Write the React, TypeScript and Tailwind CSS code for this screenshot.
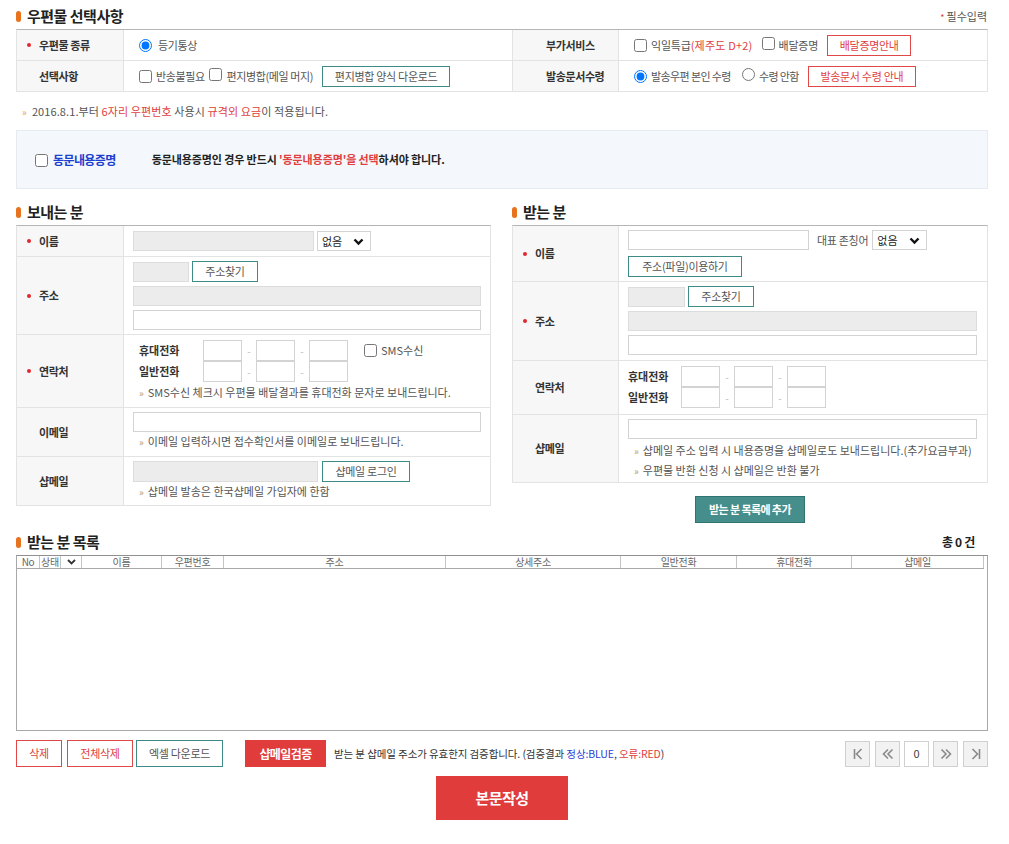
import React from "react";

const Bullet = ({ req }: { req?: boolean }) => (
  <span className="w-[12px] flex items-center shrink-0">
    {req && <span className="w-[4px] h-[4px] rounded-full bg-[#e0282e]" />}
  </span>
);

function Label({ children, req }: { children: React.ReactNode; req?: boolean }) {
  return (
    <div className="bg-[#f7f7f7] border-r border-[#e3e3e3] flex items-center pl-[10px] text-[11px] font-bold text-[#333] tracking-[-0.4px]">
      <Bullet req={req} />
      {children}
    </div>
  );
}

function Title({ children }: { children: React.ReactNode }) {
  return (
    <div className="flex items-center gap-[6px] h-[20px]">
      <span className="w-[5px] h-[11px] rounded-[3px] bg-[#e8731e]" />
      <span className="text-[15px] font-bold text-[#222] tracking-[-0.5px]">{children}</span>
    </div>
  );
}

const Note = ({ children, h = "h-[16px]" }: { children: React.ReactNode; h?: string }) => (
  <div className={`${h} flex items-center text-[11px] text-[#555]`}>
    <span className="text-[#b59a78] text-[10px] mr-[4px] ml-[6px]">»</span>
    {children}
  </div>
);

const GrayInput = ({ w }: { w: string }) => (
  <input readOnly className={`${w} h-[20px] bg-[#ececec] border border-[#dcdcdc] outline-none`} />
);
const WhiteInput = ({ w }: { w: string }) => (
  <input className={`${w} h-[20px] bg-white border border-[#d3d3d3] outline-none`} />
);

const Chevron = () => (
  <svg width="11" height="8" viewBox="0 0 11 8">
    <path d="M1.5 1.5 L5.5 5.5 L9.5 1.5" fill="none" stroke="#111" strokeWidth="2.4" />
  </svg>
);

function Select({ w }: { w: string }) {
  return (
    <div className={`relative ${w} h-[20px] border border-[#d3d3d3] bg-white flex items-center pl-[4px] text-[11px] text-[#222]`}>
      <span>없음</span>
      <span className="absolute right-[6px] top-[6px]">
        <Chevron />
      </span>
    </div>
  );
}

const TealBtn = ({ w, children, h = "h-[21px]" }: { w: string; children: React.ReactNode; h?: string }) => (
  <button className={`${w} ${h} border border-[#3d8a86] bg-white text-[11px] text-[#555] flex items-center justify-center tracking-[-0.3px]`}>
    {children}
  </button>
);
const RedBtn = ({ w, children, h = "h-[21px]" }: { w: string; children: React.ReactNode; h?: string }) => (
  <button className={`${w} ${h} border border-[#e04848] bg-white text-[11px] text-[#e04040] flex items-center justify-center tracking-[-0.3px]`}>
    {children}
  </button>
);

const Check = () => <input type="checkbox" className="w-[13px] h-[13px] m-0 shrink-0" />;
const Radio = ({ checked }: { checked?: boolean }) => (
  <input type="radio" defaultChecked={checked} className="w-[13px] h-[13px] m-0 shrink-0" />
);

const PhoneBox = () => <input className="w-[39px] h-[21px] border border-[#d3d3d3] bg-white outline-none" />;
const Dash = () => <span className="w-[14px] text-center text-[#bbb] text-[10px]">-</span>;

function PhoneRows({ sms, labelW }: { sms?: boolean; labelW: string }) {
  return (
    <div className="flex flex-col">
      <div className="flex items-center">
        <span className={`${labelW} text-[11px] font-bold text-[#333]`}>휴대전화</span>
        <PhoneBox />
        <Dash />
        <PhoneBox />
        <Dash />
        <PhoneBox />
        {sms && (
          <label className="flex items-center gap-[4px] ml-[16px] text-[11px] text-[#555]">
            <Check />
            SMS수신
          </label>
        )}
      </div>
      <div className="flex items-center">
        <span className={`${labelW} text-[11px] font-bold text-[#333]`}>일반전화</span>
        <PhoneBox />
        <Dash />
        <PhoneBox />
        <Dash />
        <PhoneBox />
      </div>
    </div>
  );
}

function Pager({ children, white }: { children: React.ReactNode; white?: boolean }) {
  return (
    <div
      className={`w-[25px] h-[26px] border border-[#d0d0d0] flex items-center justify-center text-[11px] text-[#444] ${
        white ? "bg-white" : "bg-[#f2f2f2]"
      }`}
    >
      {children}
    </div>
  );
}

const Ico = ({ d }: { d: string }) => (
  <svg width="14" height="14" viewBox="0 0 14 14">
    <path d={d} fill="none" stroke="#8a8a8a" strokeWidth="1.6" />
  </svg>
);

export default function App() {
  return (
    <div className="w-[1009px] min-h-[844px] bg-white text-[#333] font-['Noto_Sans_CJK_KR','Noto_Sans',sans-serif]">
      <div className="ml-[16px] w-[972px] pt-[6px] pb-[25px]">
        {/* 우편물 선택사항 */}
        <div className="flex items-center justify-between">
          <Title>우편물 선택사항</Title>
          <div className="text-[11px] text-[#555] mr-[1px]">
            <span className="text-[#e04040] text-[9px] mr-[2px]">*</span>필수입력
          </div>
        </div>
        <div className="mt-[3px] border-t border-t-[#b5b5b5] border-x border-x-[#e3e3e3]">
          <div className="grid grid-cols-[107px_389px_106px_1fr] h-[31px] border-b border-[#e3e3e3]">
            <Label req>우편물 종류</Label>
            <div className="flex items-center pl-[15px] gap-[5px] text-[11px] text-[#555] border-r border-[#e3e3e3]">
              <Radio checked />
              <span className="ml-[1px] tracking-[-0.4px]">등기통상</span>
            </div>
            <Label>
              <span className="ml-[11px]">부가서비스</span>
            </Label>
            <div className="flex items-center pl-[15px] text-[11px] text-[#555]">
              <Check />
              <span className="ml-[4px] tracking-[-0.2px]">
                익일특급<span className="text-[#e04040] tracking-[0.2px]">(제주도 D+2)</span>
              </span>
              <span className="ml-[9px]">
                <Check />
              </span>
              <span className="ml-[4px] tracking-[-0.2px]">배달증명</span>
              <span className="ml-[9px]">
                <RedBtn w="w-[84px]">배달증명안내</RedBtn>
              </span>
            </div>
          </div>
          <div className="grid grid-cols-[107px_389px_106px_1fr] h-[31px] border-b border-[#e3e3e3]">
            <Label>선택사항</Label>
            <div className="flex items-center pl-[15px] text-[11px] text-[#555] border-r border-[#e3e3e3] tracking-[-0.4px]">
              <Check />
              <span className="ml-[4px]">반송불필요</span>
              <span className="ml-[4px]">
                <Check />
              </span>
              <span className="ml-[5px]">편지병합(메일 머지)</span>
              <span className="ml-[9px]">
                <TealBtn w="w-[128px]">편지병합 양식 다운로드</TealBtn>
              </span>
            </div>
            <Label>
              <span className="ml-[11px]">발송문서수령</span>
            </Label>
            <div className="flex items-center pl-[15px] text-[11px] text-[#555] tracking-[-0.6px]">
              <Radio checked />
              <span className="ml-[4px]">발송우편 본인 수령</span>
              <span className="ml-[11px]">
                <Radio />
              </span>
              <span className="ml-[4px]">수령 안함</span>
              <span className="ml-[9px]">
                <RedBtn w="w-[108px]">발송문서 수령 안내</RedBtn>
              </span>
            </div>
          </div>
        </div>

        <div className="mt-[11px] h-[16px] flex items-center text-[11px] text-[#555] tracking-[0.1px]">
          <span className="text-[#eaa060] text-[10px] ml-[6px] mr-[5px]">»</span>
          2016.8.1.부터&nbsp;<span className="text-[#e04040]">6자리 우편번호</span>&nbsp;사용시&nbsp;
          <span className="text-[#e04040]">규격외 요금</span>이 적용됩니다.
        </div>

        {/* 동문내용증명 */}
        <div className="mt-[11px] h-[59px] bg-[#f4f8fc] border border-[#e6ebf1] flex items-center">
          <span className="ml-[18px]">
            <Check />
          </span>
          <span className="ml-[5px] text-[12px] font-bold text-[#1d3fcf] tracking-[-0.6px]">동문내용증명</span>
          <span className="ml-[36px] text-[11px] font-bold text-[#222] tracking-[-0.1px]">
            동문내용증명인 경우 반드시 <span className="text-[#e04040]">'동문내용증명'을 선택</span>하셔야 합니다.
          </span>
        </div>

        {/* 보내는 분 / 받는 분 */}
        <div className="mt-[13px] grid grid-cols-[475px_476px] gap-x-[21px] items-start">
          {/* sender */}
          <div>
            <Title>보내는 분</Title>
            <div className="mt-[3px] border-t border-t-[#b5b5b5] border-x border-x-[#e3e3e3]">
              <div className="grid grid-cols-[107px_1fr] h-[31px] border-b border-[#e3e3e3]">
                <Label req>이름</Label>
                <div className="flex items-center pl-[9px] gap-[3px]">
                  <GrayInput w="w-[181px]" />
                  <Select w="w-[54px]" />
                </div>
              </div>
              <div className="grid grid-cols-[107px_1fr] h-[78px] border-b border-[#e3e3e3]">
                <Label req>주소</Label>
                <div className="flex flex-col pl-[9px] pr-[9px] pt-[4px] gap-[4px]">
                  <div className="flex items-center gap-[3px]">
                    <GrayInput w="w-[56px]" />
                    <TealBtn w="w-[66px]">주소찾기</TealBtn>
                  </div>
                  <GrayInput w="w-full" />
                  <WhiteInput w="w-full" />
                </div>
              </div>
              <div className="grid grid-cols-[107px_1fr] h-[73px] border-b border-[#e3e3e3]">
                <Label req>연락처</Label>
                <div className="flex flex-col pl-[9px] pt-[5px]">
                  <div className="pl-[6px]">
                    <PhoneRows sms labelW="w-[64px]" />
                  </div>
                  <div className="mt-[2px]">
                    <Note>SMS수신 체크시 우편물 배달결과를 휴대전화 문자로 보내드립니다.</Note>
                  </div>
                </div>
              </div>
              <div className="grid grid-cols-[107px_1fr] h-[49px] border-b border-[#e3e3e3]">
                <Label>이메일</Label>
                <div className="flex flex-col pl-[9px] pr-[9px] pt-[4px] gap-[1px]">
                  <WhiteInput w="w-full" />
                  <Note>이메일 입력하시면 접수확인서를 이메일로 보내드립니다.</Note>
                </div>
              </div>
              <div className="grid grid-cols-[107px_1fr] h-[49px] border-b border-[#e3e3e3]">
                <Label>샵메일</Label>
                <div className="flex flex-col pl-[9px] pt-[4px] gap-[1px]">
                  <div className="flex items-center gap-[4px]">
                    <input readOnly className="w-[185px] h-[21px] bg-[#ececec] border border-[#dcdcdc] outline-none" />
                    <TealBtn w="w-[88px]">샵메일 로그인</TealBtn>
                  </div>
                  <Note>샵메일 발송은 한국샵메일 가입자에 한함</Note>
                </div>
              </div>
            </div>
          </div>

          {/* receiver */}
          <div>
            <Title>받는 분</Title>
            <div className="mt-[3px] border-t border-t-[#b5b5b5] border-x border-x-[#e3e3e3]">
              <div className="grid grid-cols-[106px_1fr] h-[56px] border-b border-[#e3e3e3]">
                <Label req>이름</Label>
                <div className="flex flex-col pl-[9px] pt-[4px] gap-[6px]">
                  <div className="flex items-center">
                    <WhiteInput w="w-[181px]" />
                    <span className="ml-[8px] text-[11px] text-[#555] tracking-[-0.3px]">대표 존칭어</span>
                    <span className="ml-[4px]">
                      <Select w="w-[55px]" />
                    </span>
                  </div>
                  <TealBtn w="w-[114px]">주소(파일)이용하기</TealBtn>
                </div>
              </div>
              <div className="grid grid-cols-[106px_1fr] h-[79px] border-b border-[#e3e3e3]">
                <Label req>주소</Label>
                <div className="flex flex-col pl-[9px] pr-[10px] pt-[4px] gap-[4px]">
                  <div className="flex items-center gap-[3px]">
                    <GrayInput w="w-[57px]" />
                    <TealBtn w="w-[66px]">주소찾기</TealBtn>
                  </div>
                  <GrayInput w="w-full" />
                  <WhiteInput w="w-full" />
                </div>
              </div>
              <div className="grid grid-cols-[106px_1fr] h-[54px] border-b border-[#e3e3e3]">
                <Label>연락처</Label>
                <div className="flex flex-col pl-[9px] pt-[5px]">
                  <PhoneRows labelW="w-[53px]" />
                </div>
              </div>
              <div className="grid grid-cols-[106px_1fr] h-[68px] border-b border-[#e3e3e3]">
                <Label>샵메일</Label>
                <div className="flex flex-col pl-[9px] pr-[10px] pt-[4px] gap-[2px]">
                  <WhiteInput w="w-full" />
                  <Note h="h-[18px]">샵메일 주소 입력 시 내용증명을 샵메일로도 보내드립니다.(추가요금부과)</Note>
                  <Note h="h-[18px]">우편물 반환 신청 시 샵메일은 반환 불가</Note>
                </div>
              </div>
            </div>
            <div className="flex justify-center mt-[13px]">
              <button className="w-[110px] h-[27px] bg-[#468e8b] border border-[#2f7471] text-white text-[11px] font-bold tracking-[-0.6px]">
                받는 분 목록에 추가
              </button>
            </div>
          </div>
        </div>

        {/* 받는 분 목록 */}
        <div className="mt-[9px] flex items-center justify-between">
          <Title>받는 분 목록</Title>
          <span className="mr-[13px] text-[12px] font-bold text-[#222] tracking-[-0.3px]">총 0 건</span>
        </div>
        <div className="mt-[3px] h-[176px] border border-[#a8a8a8] border-t-[#909090] flex flex-col">
          <div className="grid grid-cols-[23px_21px_21px_80px_62px_222px_175px_116px_115px_132px] h-[13px] border-b border-[#a8a8a8] w-[967px] text-[10px] text-[#666] leading-[12px]">
            {["No", "상태", "", "이름", "우편번호", "주소", "상세주소", "일반전화", "휴대전화", "샵메일"].map((t, i) => (
              <div key={i} className="border-r border-[#c4c4c4] flex items-center justify-center tracking-[-0.3px]">
                {i === 2 ? (
                  <svg width="9" height="6" viewBox="0 0 9 6">
                    <path d="M1 1 L4.5 4.5 L8 1" fill="none" stroke="#333" strokeWidth="1.8" />
                  </svg>
                ) : (
                  t
                )}
              </div>
            ))}
          </div>
          <div className="flex-1" />
        </div>

        {/* bottom buttons */}
        <div className="mt-[9px] flex items-center">
          <RedBtn w="w-[46px]" h="h-[27px]">
            삭제
          </RedBtn>
          <span className="ml-[5px]">
            <RedBtn w="w-[66px]" h="h-[27px]">
              전체삭제
            </RedBtn>
          </span>
          <span className="ml-[3px]">
            <TealBtn w="w-[87px]" h="h-[27px]">
              엑셀 다운로드
            </TealBtn>
          </span>
          <button className="ml-[22px] w-[81px] h-[27px] bg-[#e03c3c] text-white text-[12px] font-bold tracking-[-0.6px]">
            샵메일검증
          </button>
          <span className="ml-[8px] text-[10.5px] text-[#333] tracking-[-0.1px]">
            받는 분 샵메일 주소가 유효한지 검증합니다. (검증결과 <span className="text-[#2c3fd6]">정상:BLUE</span>,{" "}
            <span className="text-[#e04040]">오류:RED</span>)
          </span>
          <div className="ml-auto flex items-center gap-[4px]">
            <Pager>
              <Ico d="M3.5 2 V12 M10.5 2 L5.5 7 L10.5 12" />
            </Pager>
            <span className="ml-[1px]">
              <Pager>
                <Ico d="M7 2.5 L2.5 7 L7 11.5 M11.5 2.5 L7 7 L11.5 11.5" />
              </Pager>
            </span>
            <Pager white>0</Pager>
            <Pager>
              <Ico d="M2.5 2.5 L7 7 L2.5 11.5 M7 2.5 L11.5 7 L7 11.5" />
            </Pager>
            <span className="ml-[1px]">
              <Pager>
                <Ico d="M3.5 2 L8.5 7 L3.5 12 M10.5 2 V12" />
              </Pager>
            </span>
          </div>
        </div>

        <div className="mt-[9px] flex justify-center">
          <button className="w-[132px] h-[44px] bg-[#e03c3c] text-white text-[15px] font-bold tracking-[-0.6px]">
            본문작성
          </button>
        </div>
      </div>
    </div>
  );
}
